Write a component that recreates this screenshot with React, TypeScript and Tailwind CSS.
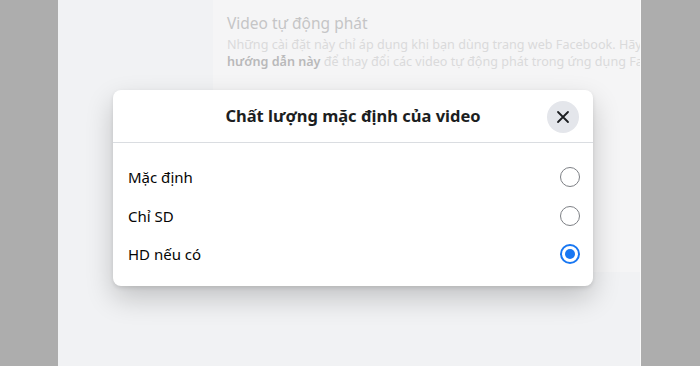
import React from "react";

function Radio({ checked }: { checked?: boolean }) {
  if (checked) {
    return (
      <div className="w-[20px] h-[20px] rounded-full border-2 border-[#1877f2] flex items-center justify-center">
        <div className="w-[10px] h-[10px] rounded-full bg-[#1877f2]" />
      </div>
    );
  }
  return <div className="w-[20px] h-[20px] rounded-full border-[1.5px] border-[#7d8085]" />;
}

export default function App() {
  const font = { fontFamily: '"Noto Sans", "Open Sans", sans-serif' };
  const rows = [
    { label: "Mặc định", checked: false },
    { label: "Chỉ SD", checked: false },
    { label: "HD nếu có", checked: true },
  ];
  return (
    <div className="relative w-[700px] h-[366px] overflow-hidden flex bg-[#adadad]" style={font}>
      <div className="w-[58px] shrink-0 bg-[#adadad]" />
      <div className="w-[583px] shrink-0 flex bg-[#f1f2f4] border-r border-[#fafafa]">
        <div className="w-[155px] shrink-0" />
        <div className="flex-1 h-[272px] bg-[#f5f5f6] overflow-hidden pl-[14px] pt-[11px]">
          <div className="text-[15.5px] leading-[24px] text-[#c5c5c6] whitespace-nowrap">Video tự động phát</div>
          <div className="text-[12.6px] leading-[17px] text-[#dadadb] whitespace-nowrap mt-[1px]">
            Những cài đặt này chỉ áp dụng khi bạn dùng trang web Facebook. Hãy làm theo
          </div>
          <div className="text-[12.6px] leading-[17px] text-[#dadadb] whitespace-nowrap">
            <span className="font-semibold text-[#b9b9ba]">hướng dẫn này</span> để thay đổi các video tự động phát trong ứng dụng Facebook.
          </div>
        </div>
      </div>
      <div className="flex-1 bg-[#adadad]" />

      <div className="absolute left-[113px] top-[90px] w-[480px] bg-white rounded-[8px] shadow-[0_12px_28px_0_rgba(0,0,0,0.2),0_2px_4px_0_rgba(0,0,0,0.1)]">
        <div className="relative h-[53px] flex items-center justify-center border-b border-[#dadde1]">
          <div className="text-[16.5px] font-bold text-[#1c1e21]">Chất lượng mặc định của video</div>
          <div className="absolute right-[14px] top-[11px] w-[32px] h-[32px] rounded-full bg-[#e4e6eb] flex items-center justify-center">
            <svg width="14" height="14" viewBox="0 0 14 14">
              <path d="M2 2 L12 12 M12 2 L2 12" stroke="#1c1e21" strokeWidth="1.8" strokeLinecap="round" />
            </svg>
          </div>
        </div>
        <div className="pt-[15px] pb-[12px]">
          {rows.map((r) => (
            <div key={r.label} className="h-[38.5px] flex items-center justify-between pl-[15px] pr-[13px]">
              <span className="text-[15px] text-[#050505]">{r.label}</span>
              <Radio checked={r.checked} />
            </div>
          ))}
        </div>
      </div>
    </div>
  );
}
